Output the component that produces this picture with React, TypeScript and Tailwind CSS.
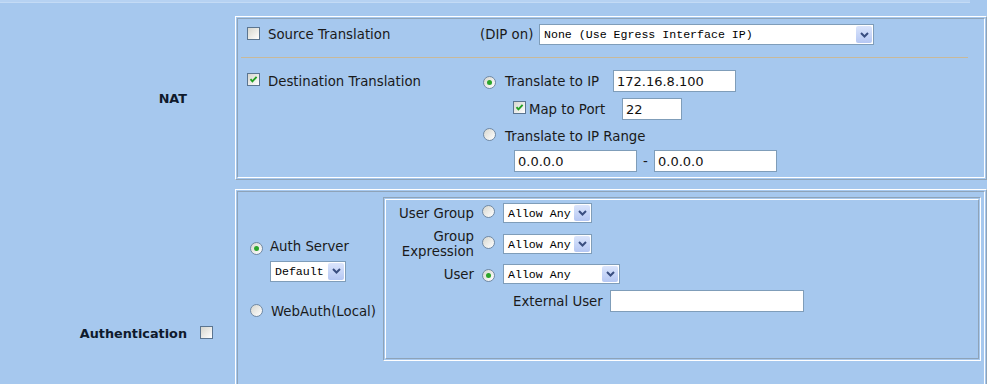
import React from "react";

const Checkbox = ({ checked }: { checked?: boolean }) => (
  <span className="relative inline-block w-[13px] h-[13px] shrink-0 border border-[#5b7590] bg-linear-to-br from-[#d6d6ce] to-white">
    {checked && (
      <svg className="absolute left-0 top-0" width="11" height="11" viewBox="0 0 11 11">
        <path d="M2.5 5.2 L4.4 7.3 L8.6 2.8" stroke="#22a022" strokeWidth="1.9" fill="none" />
      </svg>
    )}
  </span>
);

const Radio = ({ checked }: { checked?: boolean }) => (
  <span className="inline-flex items-center justify-center w-[13px] h-[13px] shrink-0 rounded-full border border-[#7189a3] bg-linear-to-br from-[#d7d7cf] to-white">
    {checked && <span className="w-[5px] h-[5px] rounded-full bg-[#2ba52b]" />}
  </span>
);

const Chevron = () => (
  <svg width="9" height="6" viewBox="0 0 9 6">
    <path d="M1 1 L4.5 4.5 L8 1" stroke="#3a4e80" strokeWidth="2" fill="none" />
  </svg>
);

const Select = ({ text, className }: { text: string; className: string }) => (
  <div className={"flex items-stretch shrink-0 border border-[#7f9db9] bg-white " + className}>
    <span className="flex-1 flex items-center pl-[4px] font-['Liberation_Mono',monospace] text-[11.6px] text-black whitespace-nowrap overflow-hidden">
      {text}
    </span>
    <span className="w-[16px] my-px mr-px flex items-center justify-center rounded-[2px] bg-linear-to-b from-[#dbe5fc] to-[#b5c7f3]">
      <Chevron />
    </span>
  </div>
);

const TextInput = ({ value, className }: { value?: string; className: string }) => (
  <div className={"flex items-center shrink-0 border border-[#7f9db9] bg-white pl-[3px] text-[13px] text-[#111] " + className}>
    {value}
  </div>
);

const Ridge = ({ className, children }: { className: string; children: React.ReactNode }) => (
  <div className={"flex shrink-0 p-px border border-white border-r-[#8ea3b8] border-b-[#8ea3b8] " + className}>
    <div className="flex-1 border border-[#8ea3b8] border-r-white border-b-white">{children}</div>
  </div>
);

export default function App() {
  return (
    <div className="w-[987px] h-[384px] overflow-hidden bg-[#a6c8ee] text-[#1a1a1a] font-['DejaVu_Sans',sans-serif] text-[13.3px] leading-[15px]">
      <div className="h-[3px] w-[970px] bg-[#b6d2f2] border-b border-[#c4dbf5]" />

      {/* NAT row */}
      <div className="mt-[13px] flex">
        <div className="w-[235px] flex items-center justify-end pr-[48px] font-bold text-[12.8px] text-[#0f1a2c]">
          NAT
        </div>
        <Ridge className="w-[752px] h-[164px]">
          <div className="h-[31px] flex items-center">
            <div className="w-[242px] flex items-center">
              <span className="ml-[9px]">
                <Checkbox />
              </span>
              <span className="ml-[8px]">Source Translation</span>
            </div>
            <span className="w-[59px]">(DIP on)</span>
            <Select text="None (Use Egress Interface IP)" className="w-[335px] h-[21px]" />
          </div>
          <div className="mt-[7px] h-px ml-[3px] mr-[16px] bg-[#c8b99a]" />
          <div className="flex">
            <div className="w-[242px] pt-[12px]">
              <div className="h-[22px] flex items-center">
                <span className="ml-[9px]">
                  <Checkbox checked />
                </span>
                <span className="ml-[8px]">Destination Translation</span>
              </div>
            </div>
            <div className="flex flex-col pt-[12px]">
              <div className="h-[22px] flex items-center">
                <span className="ml-[3px]">
                  <Radio checked />
                </span>
                <span className="ml-[9px] w-[108px]">Translate to IP</span>
                <TextInput value="172.16.8.100" className="w-[123px] h-[22px]" />
              </div>
              <div className="mt-[6px] h-[22px] flex items-center">
                <span className="ml-[33px]">
                  <Checkbox checked />
                </span>
                <span className="ml-[3px] w-[93px]">Map to Port</span>
                <TextInput value="22" className="w-[60px] h-[22px]" />
              </div>
              <div className="mt-[6px] h-[20px] flex items-center">
                <span className="ml-[3px]">
                  <Radio />
                </span>
                <span className="ml-[9px]">Translate to IP Range</span>
              </div>
              <div className="mt-[4px] h-[22px] flex items-center">
                <TextInput value="0.0.0.0" className="ml-[34px] w-[123px] h-[22px]" />
                <span className="w-[17px] text-center">-</span>
                <TextInput value="0.0.0.0" className="w-[123px] h-[22px]" />
              </div>
            </div>
          </div>
        </Ridge>
      </div>

      {/* Authentication row */}
      <div className="mt-[9px] flex">
        <div className="w-[235px] flex items-center justify-end pr-[22px]">
          <span className="font-bold text-[12.8px] text-[#0f1a2c]">Authentication</span>
          <span className="ml-[13px]">
            <Checkbox />
          </span>
        </div>
        <Ridge className="w-[752px] h-[289px]">
          <div className="flex">
            <div className="w-[145px] h-[164px] mt-[5px] flex flex-col justify-center">
              <div className="h-[16px] flex items-center">
                <span className="ml-[12px]">
                  <Radio checked />
                </span>
                <span className="ml-[7px]">Auth Server</span>
              </div>
              <Select text="Default" className="ml-[32px] mt-[6px] w-[76px] h-[21px]" />
              <div className="mt-[22px] h-[16px] flex items-center">
                <span className="ml-[12px]">
                  <Radio />
                </span>
                <span className="ml-[8px]">WebAuth(Local)</span>
              </div>
            </div>
            <div className="mt-[5px] w-[598px] h-[164px] flex p-px border border-[#8ea3b8] border-r-white border-b-white">
              <div className="flex-1 border border-white border-r-[#8ea3b8] border-b-[#8ea3b8] pt-[3px]">
                <div className="h-[20px] flex items-center">
                  <span className="w-[88px] text-right">User Group</span>
                  <span className="ml-[8px]">
                    <Radio />
                  </span>
                  <Select text="Allow Any" className="ml-[8px] w-[89px] h-[20px]" />
                </div>
                <div className="mt-[6px] h-[30px] flex items-center">
                  <span className="w-[88px] text-right leading-[15px]">
                    Group
                    <br />
                    Expression
                  </span>
                  <span className="ml-[8px]">
                    <Radio />
                  </span>
                  <Select text="Allow Any" className="ml-[8px] w-[89px] h-[20px]" />
                </div>
                <div className="mt-[5px] h-[20px] flex items-center">
                  <span className="w-[88px] text-right">User</span>
                  <span className="ml-[8px]">
                    <Radio checked />
                  </span>
                  <Select text="Allow Any" className="ml-[8px] w-[117px] h-[20px]" />
                </div>
                <div className="mt-[6px] h-[22px] flex items-center">
                  <span className="ml-[127px] w-[97px]">External User</span>
                  <TextInput className="w-[194px] h-[22px]" />
                </div>
              </div>
            </div>
          </div>
        </Ridge>
      </div>
    </div>
  );
}
